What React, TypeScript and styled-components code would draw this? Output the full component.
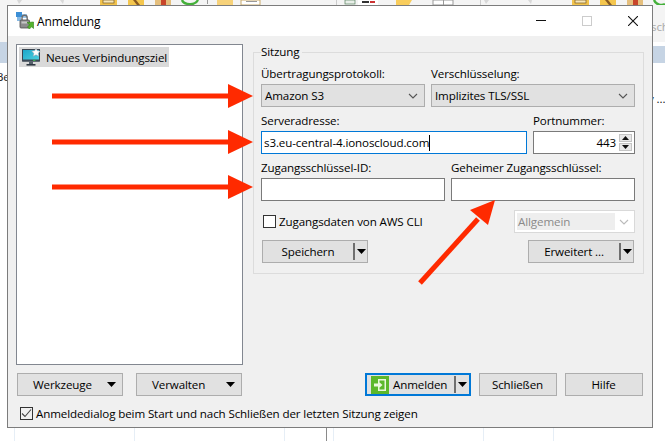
import styled, { createGlobalStyle } from "styled-components";

const GlobalStyle = createGlobalStyle`
  html, body {
    margin: 0;
    padding: 0;
    background: #fff;
  }
  * {
    box-sizing: border-box;
  }
`;

const FONT = `"Open Sans", "Noto Sans", sans-serif`;

export default function App() {
  return (
    <>
      <GlobalStyle />
      <Desktop>
        <ToolbarStrip />
        <ListHeader $side="left" />
        <ListHeader $side="right" />
        <BehindText $x={-4} $y={69} $color="#222">
          Be
        </BehindText>
        <BehindText $x={651} $y={19} $color="#aaa">
          sch
        </BehindText>
        <BehindText $x={648} $y={91} $color="#222">
          y ...
        </BehindText>
        <ColumnLine $x={14} />
        <ColumnLine $x={134} />
        <ColumnLine $x={284} />
        <ColumnLine $x={326} $dark />
        <ColumnLine $x={333} />
        <ColumnLine $x={483} />
        <ColumnLine $x={553} />

        <Dialog>
          <TitleBar>
            <TitleIcon />
            <Title>Anmeldung</Title>
            <WindowButtons>
              <MinimizeIcon />
              <MaximizeIcon />
              <CloseIcon />
            </WindowButtons>
          </TitleBar>

          <DialogBody>
            <MainRow>
              <SiteList>
                <SiteItem>
                  <MonitorIcon />
                  <span>Neues Verbindungsziel</span>
                </SiteItem>
              </SiteList>

              <Session>
                <SessionLegend>Sitzung</SessionLegend>

                <FieldRow $columns="164px 204px">
                  <Field>
                    <FieldLabel>Übertragungsprotokoll:</FieldLabel>
                    <Select>
                      Amazon S3
                      <Chevron />
                    </Select>
                  </Field>
                  <Field>
                    <FieldLabel>Verschlüsselung:</FieldLabel>
                    <Select>
                      Implizites TLS/SSL
                      <Chevron />
                    </Select>
                  </Field>
                </FieldRow>

                <FieldRow $columns="266px 102px">
                  <Field>
                    <FieldLabel>Serveradresse:</FieldLabel>
                    <TextBox $focused>
                      s3.eu-central-4.ionoscloud.com
                      <Caret />
                    </TextBox>
                  </Field>
                  <Field>
                    <FieldLabel>Portnummer:</FieldLabel>
                    <PortBox>
                      <PortValue>443</PortValue>
                      <Spinner>
                        <SpinButton>
                          <SmallTriangle $up />
                        </SpinButton>
                        <SpinButton>
                          <SmallTriangle />
                        </SpinButton>
                      </Spinner>
                    </PortBox>
                  </Field>
                </FieldRow>

                <FieldRow $columns="184px 184px">
                  <Field>
                    <FieldLabel>Zugangsschlüssel-ID:</FieldLabel>
                    <TextBox />
                  </Field>
                  <Field>
                    <FieldLabel>Geheimer Zugangsschlüssel:</FieldLabel>
                    <TextBox />
                  </Field>
                </FieldRow>

                <OptionRow>
                  <CheckLabel>
                    <CheckBox />
                    Zugangsdaten von AWS CLI
                  </CheckLabel>
                  <DisabledSelect>
                    <DisabledValue>Allgemein</DisabledValue>
                    <Chevron $muted />
                  </DisabledSelect>
                </OptionRow>

                <SessionButtons>
                  <Button $width={106}>
                    <SplitText>Speichern</SplitText>
                    <SplitDivider />
                    <DropTriangle />
                  </Button>
                  <Button $width={106}>
                    <SplitText>Erweitert ...</SplitText>
                    <SplitDivider />
                    <DropTriangle />
                  </Button>
                </SessionButtons>
              </Session>
            </MainRow>

            <ButtonRow>
              <LeftButtons>
                <MenuButton>
                  Werkzeuge
                  <DropTriangle />
                </MenuButton>
                <MenuButton>
                  Verwalten
                  <DropTriangle />
                </MenuButton>
              </LeftButtons>
              <RightButtons>
                <LoginButton>
                  <LoginIcon />
                  <LoginText>Anmelden</LoginText>
                  <SplitDivider />
                  <DropTriangle />
                </LoginButton>
                <Button $width={78}>Schließen</Button>
                <Button $width={78}>Hilfe</Button>
              </RightButtons>
            </ButtonRow>

            <StartupRow>
              <CheckBox $checked>
                <svg width="13" height="13" viewBox="0 0 13 13">
                  <path d="M2 6.5 5 9.5 11 2.5" fill="none" stroke="#444" strokeWidth="1.1" />
                </svg>
              </CheckBox>
              Anmeldedialog beim Start und nach Schließen der letzten Sitzung zeigen
            </StartupRow>
          </DialogBody>
        </Dialog>

        <Arrows />
      </Desktop>
    </>
  );
}

function ToolbarStrip() {
  return (
    <Toolbar>
      <svg width="665" height="5" viewBox="0 0 665 5">
        <g fill="#d8d8d8">
          <path d="M17 0h5l-3 4zM64 0h-4l3 4zM484 0h5l-3 4zM532 0h-4l3 4z" />
        </g>
        {[100, 572].map((x) => (
          <g key={x}>
            <rect x={x} width="17" height="5" fill="#f2c34d" />
            <rect x={x + 3} width="11" height="3" fill="#f7e7b8" stroke="#7a5a20" strokeWidth="0.7" />
            <rect x={x + 28} width="16" height="5" fill="#f4c64e" />
            <path d={`M${x + 33} 0l4 5h3l-4-5z`} fill="#8a5a20" />
            <rect x={x + 55} width="16" height="5" fill="#e5bf7d" />
            <rect x={x + 61} width="5" height="5" fill="#c8452a" />
          </g>
        ))}
        <path d="M182 0c2 5 13 6 16 0" fill="none" stroke="#44b03a" strokeWidth="2.4" />
        <path d="M654 0c2 5 8 6 11 4" fill="none" stroke="#44b03a" strokeWidth="2.4" />
        <rect x="207" width="1" height="4" fill="#999" />
        <rect x="217" width="16" height="5" fill="#f7d27a" />
        <rect x="241" width="19" height="5" fill="#fff" stroke="#c9a96a" />
        <rect x="246" y="1" width="11" height="1" fill="#999" />
        <rect x="336" width="1" height="5" fill="#ccc" />
        <rect x="345" width="10" height="4" fill="#e9efe9" stroke="#58805e" strokeWidth="0.7" />
        <rect x="358" width="20" height="5" fill="#fff" />
        <rect x="362" y="1" width="7" height="2" fill="#333" />
        <rect x="370" y="1" width="5" height="2" fill="#c33" />
        <path d="M396 0h16l-3 5h-13z" fill="#f9cd5c" />
        <rect x="433" width="20" height="5" fill="#fff" stroke="#999" />
        <rect x="443" width="1" height="5" fill="#999" />
        <rect x="480" width="1" height="5" fill="#ccc" />
      </svg>
    </Toolbar>
  );
}

function TitleIcon() {
  return (
    <IconSlot $left={8}>
      <svg width="18" height="18" viewBox="0 0 18 18">
        <rect x="0" y="0" width="6" height="5" fill="#3c8fd6" />
        <rect x="6" y="2" width="5" height="4" fill="#9cc8ec" />
        <rect x="1" y="5" width="4" height="4" fill="#86b9e4" />
        <path d="M6 8V5.8a2.6 2.6 0 0 1 5.2 0V8" fill="none" stroke="#6d6d6d" strokeWidth="1.4" />
        <rect x="4" y="8" width="9.5" height="8" rx="1" fill="#8c8c8c" stroke="#4d4d4d" strokeWidth="0.8" />
        <rect x="5.5" y="9.5" width="6" height="2" fill="#c6c6c6" />
        <path d="M11 10.5 17.5 10 17.5 16.5 15.6 14.8 13.4 17 11.5 15 13.6 12.8z" fill="#54b32d" stroke="#2f7f18" strokeWidth="0.6" />
      </svg>
    </IconSlot>
  );
}

function MonitorIcon() {
  return (
    <svg width="19" height="19" viewBox="0 0 19 19">
      <defs>
        <linearGradient id="screen" x1="0" y1="0" x2="1" y2="1">
          <stop offset="0" stopColor="#1ba5c9" />
          <stop offset="1" stopColor="#4fd3e0" />
        </linearGradient>
      </defs>
      <rect x="0.5" y="1.5" width="17" height="11.5" fill="url(#screen)" stroke="#3a4450" />
      <rect x="0.5" y="11.5" width="17" height="2" fill="#3d4a57" />
      <rect x="7" y="13.5" width="4" height="2.5" fill="#55606c" />
      <rect x="4.5" y="16" width="9" height="1.6" fill="#2f3842" />
      <rect x="11" y="11.8" width="2.4" height="1" fill="#39c24a" />
      <path
        d="M14 0l1.3 2.8 3 .4-2.2 2.1.6 3L14 6.8l-2.7 1.5.6-3-2.2-2.1 3-.4z"
        fill="#fff"
        stroke="#9aa7b2"
        strokeWidth="0.5"
      />
    </svg>
  );
}

function LoginIcon() {
  return (
    <svg width="18" height="18" viewBox="0 0 18 18">
      <rect width="18" height="18" fill="#5cb82a" />
      <path d="M7 3h8v12H7v-3h1.5v1.5h5v-9h-5V6H7z" fill="#eaf8dc" />
      <path d="M3 7.5h4V5l4.5 4L7 13v-2.5H3z" fill="#eaf8dc" />
    </svg>
  );
}

function MinimizeIcon() {
  return (
    <svg width="10" height="10" viewBox="0 0 10 10">
      <rect y="4" width="10" height="1" fill="#111" />
    </svg>
  );
}

function MaximizeIcon() {
  return (
    <svg width="10" height="10" viewBox="0 0 10 10">
      <rect x="0.5" y="0.5" width="9" height="9" fill="none" stroke="#ccc" />
    </svg>
  );
}

function CloseIcon() {
  return (
    <svg width="10" height="10" viewBox="0 0 10 10">
      <path d="M0 0 10 10M10 0 0 10" stroke="#111" strokeWidth="1.1" />
    </svg>
  );
}

function Chevron({ $muted }: { $muted?: boolean }) {
  return (
    <ChevronSlot>
      <svg width="10" height="6" viewBox="0 0 10 6">
        <path d="M1 1 5 5 9 1" fill="none" stroke={$muted ? "#bbb" : "#555"} strokeWidth="1.1" />
      </svg>
    </ChevronSlot>
  );
}

function DropTriangle() {
  return (
    <svg width="9" height="5" viewBox="0 0 9 5">
      <path d="M0 0h9L4.5 5z" fill="#000" />
    </svg>
  );
}

function SmallTriangle({ $up }: { $up?: boolean }) {
  return (
    <svg width="7" height="4" viewBox="0 0 7 4">
      <path d={$up ? "M3.5 0 7 4H0z" : "M0 0h7L3.5 4z"} fill="#111" />
    </svg>
  );
}

function Arrows() {
  return (
    <ArrowLayer width="665" height="441" viewBox="0 0 665 441">
      {[96, 142, 187].map((y) => (
        <g key={y} fill="#ff2a00">
          <rect x="52" y={y - 2.5} width="178" height="5" />
          <path d={`M228 ${y - 12} 253 ${y} 228 ${y + 12}z`} />
        </g>
      ))}
      <path d="M420 283 478 219" stroke="#ff2a00" strokeWidth="5" />
      <path d="M495 200 470 210 488 225z" fill="#ff2a00" />
    </ArrowLayer>
  );
}

const Desktop = styled.div`
  position: relative;
  width: 665px;
  height: 441px;
  padding: 5px 0 0 7px;
  overflow: hidden;
  background: #fff;
  font-family: ${FONT};
  font-size: 11.6px;
  letter-spacing: -0.12px;
  color: #000;
`;

const Toolbar = styled.div`
  position: absolute;
  top: 0;
  left: 0;
  width: 665px;
  height: 42px;
  background: #f4f4f4;

  svg {
    display: block;
  }
`;

const ListHeader = styled.div<{ $side: "left" | "right" }>`
  position: absolute;
  top: ${(p) => (p.$side === "left" ? 42 : 46)}px;
  ${(p) => p.$side}: 0;
  width: 14px;
  height: ${(p) => (p.$side === "left" ? 21 : 17)}px;
  background: #c6d4e4;
`;

const BehindText = styled.div<{ $x: number; $y: number; $color: string }>`
  position: absolute;
  left: ${(p) => p.$x}px;
  top: ${(p) => p.$y}px;
  line-height: 16px;
  white-space: nowrap;
  color: ${(p) => p.$color};
`;

const ColumnLine = styled.div<{ $x: number; $dark?: boolean }>`
  position: absolute;
  left: ${(p) => p.$x}px;
  top: 428px;
  width: 1px;
  height: 13px;
  background: ${(p) => (p.$dark ? "#8a8a8a" : "#e6eef6")};
`;

const Dialog = styled.div`
  position: relative;
  display: flex;
  flex-direction: column;
  width: 646px;
  height: 423px;
  border: 1px solid #7c7c7c;
  background: #f0f0f0;
`;

const TitleBar = styled.div`
  display: flex;
  align-items: center;
  height: 30px;
  background: #fff;
`;

const IconSlot = styled.div<{ $left: number }>`
  display: flex;
  margin-left: ${(p) => p.$left}px;
`;

const Title = styled.div`
  margin-left: 3px;
  font-size: 12px;
`;

const WindowButtons = styled.div`
  display: flex;
  align-items: center;
  gap: 36px;
  margin-left: auto;
  margin-right: 14px;

  svg {
    display: block;
  }
`;

const DialogBody = styled.div`
  display: flex;
  flex-direction: column;
  flex: 1;
  padding: 8px 8px 0 8px;
`;

const MainRow = styled.div`
  display: flex;
  gap: 10px;
  align-items: flex-start;
  height: 321px;
`;

const SiteList = styled.div`
  width: 227px;
  height: 321px;
  padding: 2px;
  border: 1px solid #828790;
  background: #fff;
`;

const SiteItem = styled.div`
  display: flex;
  align-items: center;
  gap: 5px;
  width: 150px;
  height: 20px;
  padding-left: 3px;
  background: #d9d9d9;
  white-space: nowrap;

  svg {
    flex: none;
  }
`;

const Session = styled.fieldset`
  display: flex;
  flex-direction: column;
  width: 391px;
  height: 230px;
  margin: 0;
  padding: 6px 8px 0 7px;
  border: 1px solid #dcdcdc;
  min-inline-size: 0;
`;

const SessionLegend = styled.legend`
  padding: 0 2px 0 0;
  margin-left: 0;
  line-height: 16px;
`;

const FieldRow = styled.div<{ $columns: string }>`
  display: grid;
  grid-template-columns: ${(p) => p.$columns};
  column-gap: 6px;
  margin-bottom: 6px;
`;

const Field = styled.div`
  display: flex;
  flex-direction: column;
  gap: 2px;
`;

const FieldLabel = styled.div`
  line-height: 16px;
  white-space: nowrap;
`;

const Select = styled.div`
  display: flex;
  align-items: center;
  justify-content: space-between;
  height: 23px;
  padding: 0 5px 0 3px;
  border: 1px solid #adadad;
  background: #e1e1e1;
`;

const ChevronSlot = styled.span`
  display: flex;
  margin-left: auto;
  padding-right: 1px;
`;

const TextBox = styled.div<{ $focused?: boolean }>`
  display: flex;
  align-items: center;
  height: 23px;
  padding: 0 2px;
  border: 1px solid ${(p) => (p.$focused ? "#0078d7" : "#7a7a7a")};
  background: #fff;
  white-space: nowrap;
`;

const Caret = styled.span`
  width: 1px;
  height: 16px;
  background: #000;
`;

const PortBox = styled.div`
  display: flex;
  align-items: center;
  height: 23px;
  padding: 0 2px;
  border: 1px solid #7a7a7a;
  background: #fff;
`;

const PortValue = styled.div`
  flex: 1;
  padding-right: 3px;
  text-align: right;
`;

const Spinner = styled.div`
  display: flex;
  flex-direction: column;
  gap: 1px;
`;

const SpinButton = styled.div`
  display: flex;
  align-items: center;
  justify-content: center;
  width: 13px;
  height: 8px;
  border: 1px solid #c4c4c4;
  background: #e8e8e8;
`;

const OptionRow = styled.div`
  display: flex;
  align-items: center;
  justify-content: space-between;
  height: 23px;
  margin-top: 3px;
`;

const CheckLabel = styled.div`
  display: flex;
  align-items: center;
  gap: 3px;
  margin-left: 2px;
`;

const CheckBox = styled.div<{ $checked?: boolean }>`
  display: flex;
  flex: none;
  width: 13px;
  height: 13px;
  border: 1px solid #333;
  background: ${(p) => (p.$checked ? "#f0f0f0" : "#fff")};

  svg {
    margin: -1px;
  }
`;

const DisabledSelect = styled.div`
  display: flex;
  align-items: center;
  width: 121px;
  height: 23px;
  padding: 2px 4px 2px 2px;
  border: 1px solid #d9d9d9;
  background: #fff;
`;

const DisabledValue = styled.div`
  display: flex;
  align-items: center;
  width: 98px;
  height: 17px;
  padding-left: 1px;
  background: #eeeeee;
  color: #8a8a8a;
`;

const SessionButtons = styled.div`
  display: flex;
  justify-content: space-between;
  margin: 7px 1px 0 1px;
`;

const Button = styled.div<{ $width: number }>`
  display: flex;
  align-items: center;
  justify-content: center;
  width: ${(p) => p.$width}px;
  height: 23px;
  padding-right: 1px;
  border: 1px solid #adadad;
  background: #e1e1e1;
  white-space: nowrap;
`;

const SplitText = styled.span`
  flex: 1;
  text-align: center;
`;

const SplitDivider = styled.span`
  flex: none;
  width: 2px;
  height: 17px;
  margin-right: 2px;
  background: #6f6f6f;
`;

const ButtonRow = styled.div`
  display: flex;
  justify-content: space-between;
  margin-top: 8px;
`;

const LeftButtons = styled.div`
  display: flex;
  gap: 13px;
  margin-left: 1px;
`;

const MenuButton = styled.div`
  display: flex;
  align-items: center;
  justify-content: space-between;
  width: 106px;
  height: 23px;
  padding: 0 6px 0 15px;
  border: 1px solid #adadad;
  background: #e1e1e1;
`;

const RightButtons = styled.div`
  display: flex;
  gap: 8px;
  margin-right: 1px;
`;

const LoginButton = styled.div`
  display: flex;
  align-items: center;
  width: 106px;
  height: 23px;
  padding: 0 2px 0 4px;
  border: 2px solid #0078d7;
  background: #e1e1e1;
`;

const LoginText = styled.span`
  flex: 1;
  margin-left: 4px;
`;

const StartupRow = styled.div`
  display: flex;
  align-items: center;
  gap: 3px;
  height: 16px;
  margin: 9px 0 0 4px;
  white-space: nowrap;
`;

const ArrowLayer = styled.svg`
  position: absolute;
  top: 0;
  left: 0;
  pointer-events: none;
`;
